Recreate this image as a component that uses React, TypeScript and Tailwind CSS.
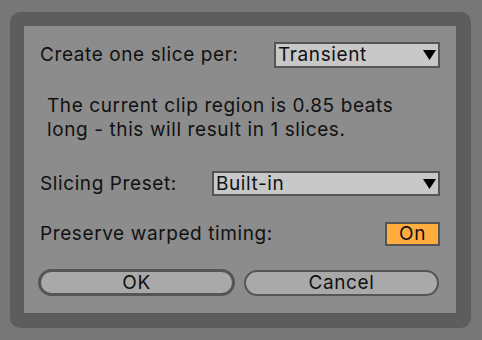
import React from "react";

const Triangle = () => (
  <svg width="13" height="10" viewBox="0 0 13 10" className="shrink-0">
    <polygon points="0,0 13,0 6.5,10" fill="#000" />
  </svg>
);

export default function App() {
  return (
    <div className="w-[482px] h-[340px] bg-[#777777] pt-[12px] pl-[10px] font-['Inter',sans-serif] tracking-[0.6px]">
      <div className="w-[461px] h-[316px] bg-[#5d5d5d] rounded-[10px] pt-[14px] pl-[14px]">
        <div className="w-[432px] h-[287px] bg-[#8c8c8c] flex flex-col px-[16px] pt-[16px] text-[19px] text-[#111111] leading-[24px]">
          <div className="flex items-center justify-between h-[26px]">
            <span>Create one slice per:</span>
            <div className="w-[166px] h-[26px] border-2 border-[#555555] bg-[#c8c8c8] flex items-center justify-between pl-[2px] pr-[2px]">
              <span>Transient</span>
              <Triangle />
            </div>
          </div>
          <div className="mt-[26px] pl-[7px] whitespace-nowrap">
            <div>The current clip region is 0.85 beats</div>
            <div>long - this will result in 1 slices.</div>
          </div>
          <div className="mt-[29px] flex items-center justify-between h-[25px]">
            <span>Slicing Preset:</span>
            <div className="w-[228px] h-[25px] border-2 border-[#555555] bg-[#c8c8c8] flex items-center justify-between pl-[2px] pr-[2px]">
              <span>Built-in</span>
              <Triangle />
            </div>
          </div>
          <div className="mt-[26px] flex items-center justify-between h-[24px]">
            <span>Preserve warped timing:</span>
            <div className="w-[55px] h-[24px] border-2 border-[#555555] bg-[#ffad3f] flex items-center justify-center">
              On
            </div>
          </div>
          <div className="mt-[23px] flex items-center ml-[-2px] gap-[9px]">
            <div className="w-[197px] h-[27px] rounded-full border-[3px] border-[#555555] bg-[#a9a9a9] flex items-center justify-center">
              OK
            </div>
            <div className="w-[195px] h-[26px] rounded-full border-2 border-[#555555] bg-[#a9a9a9] flex items-center justify-center">
              Cancel
            </div>
          </div>
        </div>
      </div>
    </div>
  );
}
